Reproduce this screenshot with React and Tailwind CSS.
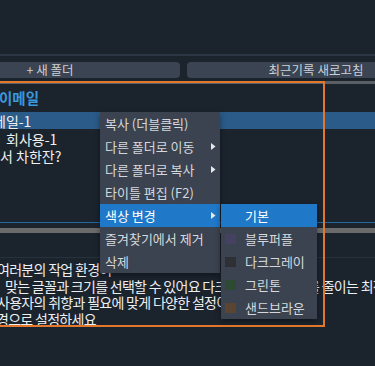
import React from "react";

const font = "font-['Noto_Sans_CJK_KR','Noto_Sans',sans-serif]";

function Arrow() {
  return (
    <svg width="5" height="7" viewBox="0 0 5 7" className="shrink-0">
      <path d="M0 0 L4.5 3.5 L0 7 Z" fill="#e6e9ec" />
    </svg>
  );
}

function MenuItem({ label, arrow, active }) {
  return (
    <div
      className={`flex h-[23px] items-center justify-between pl-[5px] pr-[4px] ${
        active ? "bg-[#1f78c8] text-white" : "text-[#d5d9de]"
      }`}
    >
      <span>{label}</span>
      {arrow ? <Arrow /> : null}
    </div>
  );
}

function SubItem({ label, swatch, active }) {
  return (
    <div
      className={`flex h-[23px] items-center gap-[9px] pl-[4px] ${
        active ? "bg-[#1f78c8] text-white" : "text-[#d5d9de]"
      }`}
    >
      <span
        className="h-[10px] w-[11px] shrink-0"
        style={{ backgroundColor: swatch || "transparent" }}
      />
      <span>{label}</span>
    </div>
  );
}

export default function App() {
  return (
    <div
      className={`relative h-[366px] w-[375px] overflow-hidden bg-[#1b232d] ${font}`}
    >
      <div className="h-[54px]" />
      <div className="h-[2px] bg-[#2b3644]" />
      <div className="h-[6px]" />
      {/* buttons row */}
      <div className="-ml-[80px] flex h-[16px] gap-[7px] text-[12.5px] text-[#cdd1d6]">
        <div className="flex w-[260px] shrink-0 items-center justify-center rounded-[4px] bg-[#3a4452]">
          + 새 폴더
        </div>
        <div className="flex w-[258px] shrink-0 items-center justify-center rounded-[4px] bg-[#3a4452]">
          최근기록 새로고침
        </div>
      </div>
      <div className="h-[3px]" />
      {/* panel */}
      <div className="h-[3px] bg-[#5a5f66]" />
      <div className="flex h-[28px] items-center text-[14.5px] font-bold text-[#3a98dc]">
        <span className="-ml-[1px]">이메일</span>
      </div>
      <div className="flex flex-col text-[14px] text-[#eef0f2]">
        <div className="flex h-[17px] items-center bg-[#2b5b89] leading-none">
          <span className="-ml-[7px]">메일-1</span>
        </div>
        <div className="flex h-[18px] items-center pl-[6px] pt-[2px] leading-none">
          회사용-1
        </div>
        <div className="flex h-[17px] items-center leading-none">서 차한잔?</div>
      </div>
      <div className="h-[58px]" />
      <div className="h-[1px] bg-[#23679f]" />
      <div className="h-[5px]" />
      <div className="h-[5px] bg-[#6b6b6b]" />
      <div className="h-[24px]" />
      <div className="h-[1px] bg-[#28323d]" />
      <div className="pt-[3px] text-[14px] leading-[16.5px] tracking-[-0.05em] text-[#eceef0] whitespace-nowrap">
        <div className="-ml-[3px]">여러분의 작업 환경이</div>
        <div className="pl-[5px]">
          맞는 글꼴과 크기를 선택할 수 있어요 다크 모드로 눈 피로를 줄이는 최적의 화면
        </div>
        <div className="-ml-[3px]">사용자의 취향과 필요에 맞게 다양한 설정이 가능해요</div>
        <div className="-ml-[4px]">경으로 설정하세요</div>
      </div>

      {/* orange focus outline */}
      <div className="pointer-events-none absolute left-[-10px] top-[81px] h-[246px] w-[335px] border-2 border-[#e3782c]" />

      {/* context menu */}
      <div className="absolute left-[100px] top-[112px] w-[120px] bg-[#3b4350] text-[13px] shadow-[0_2px_6px_rgba(0,0,0,0.4)]">
        <MenuItem label="복사 (더블클릭)" />
        <MenuItem label="다른 폴더로 이동" arrow />
        <MenuItem label="다른 폴더로 복사" arrow />
        <MenuItem label="타이틀 편집 (F2)" />
        <MenuItem label="색상 변경" arrow active />
        <MenuItem label="즐겨찾기에서 제거" />
        <MenuItem label="삭제" />
      </div>

      {/* submenu */}
      <div className="absolute left-[221px] top-[204px] w-[96px] bg-[#3b4350] text-[13px] shadow-[0_2px_6px_rgba(0,0,0,0.4)]">
        <SubItem label="기본" active />
        <SubItem label="블루퍼플" swatch="#454160" />
        <SubItem label="다크그레이" swatch="#2e3035" />
        <SubItem label="그린톤" swatch="#2d4a32" />
        <SubItem label="샌드브라운" swatch="#5b4532" />
      </div>
    </div>
  );
}
